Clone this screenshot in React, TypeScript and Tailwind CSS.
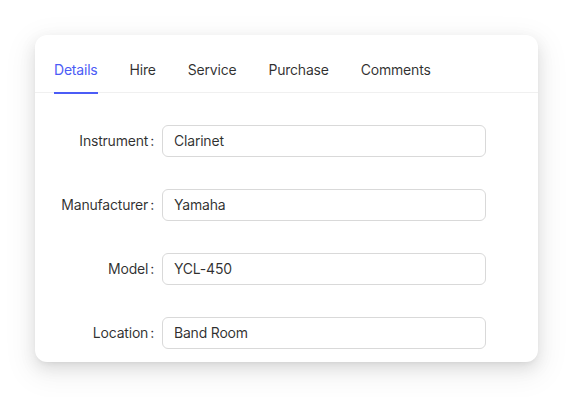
import React from 'react'

const tabs = ['Details', 'Hire', 'Service', 'Purchase', 'Comments']

const fields = [
    { label: 'Instrument', value: 'Clarinet' },
    { label: 'Manufacturer', value: 'Yamaha' },
    { label: 'Model', value: 'YCL-450' },
    { label: 'Location', value: 'Band Room' },
]

export default function App() {
    return (
        <div className="min-h-screen bg-white p-[35px] font-['Inter',sans-serif] tracking-[-0.2px] text-[rgba(0,0,0,0.82)]">
            <div className="w-[503px] h-[327px] rounded-xl bg-white shadow-[0_6px_16px_0_rgba(0,0,0,0.10),0_3px_6px_-4px_rgba(0,0,0,0.12),0_9px_28px_8px_rgba(0,0,0,0.05)]">
                {/* ── Tabs ─────────────────────────────────── */}
                <div className="flex gap-8 pl-[19px] h-[58px] border-b border-[#f0f0f0]">
                    {tabs.map((t, i) => (
                        <button
                            key={t}
                            className={`h-[59px] -mb-px flex items-center pt-[13px] text-sm leading-[22px] ${i === 0 ? 'text-[#4b5cf6] border-b-2 border-[#4b5cf6]' : 'border-b-2 border-transparent'}`}
                        >
                            {t}
                        </button>
                    ))}
                </div>

                {/* ── Form ─────────────────────────────────── */}
                <div className="flex flex-col gap-8 pt-[32px]">
                    {fields.map(f => (
                        <div key={f.label} className="flex items-center h-8">
                            <label className="w-[127px] text-right text-sm whitespace-nowrap">
                                {f.label}
                                <span className="ml-0.5 mr-2">:</span>
                            </label>
                            <div className="w-[324px] h-8 flex items-center px-[11px] border border-[#d9d9d9] rounded-md text-sm">
                                {f.value}
                            </div>
                        </div>
                    ))}
                </div>
            </div>
        </div>
    )
}
